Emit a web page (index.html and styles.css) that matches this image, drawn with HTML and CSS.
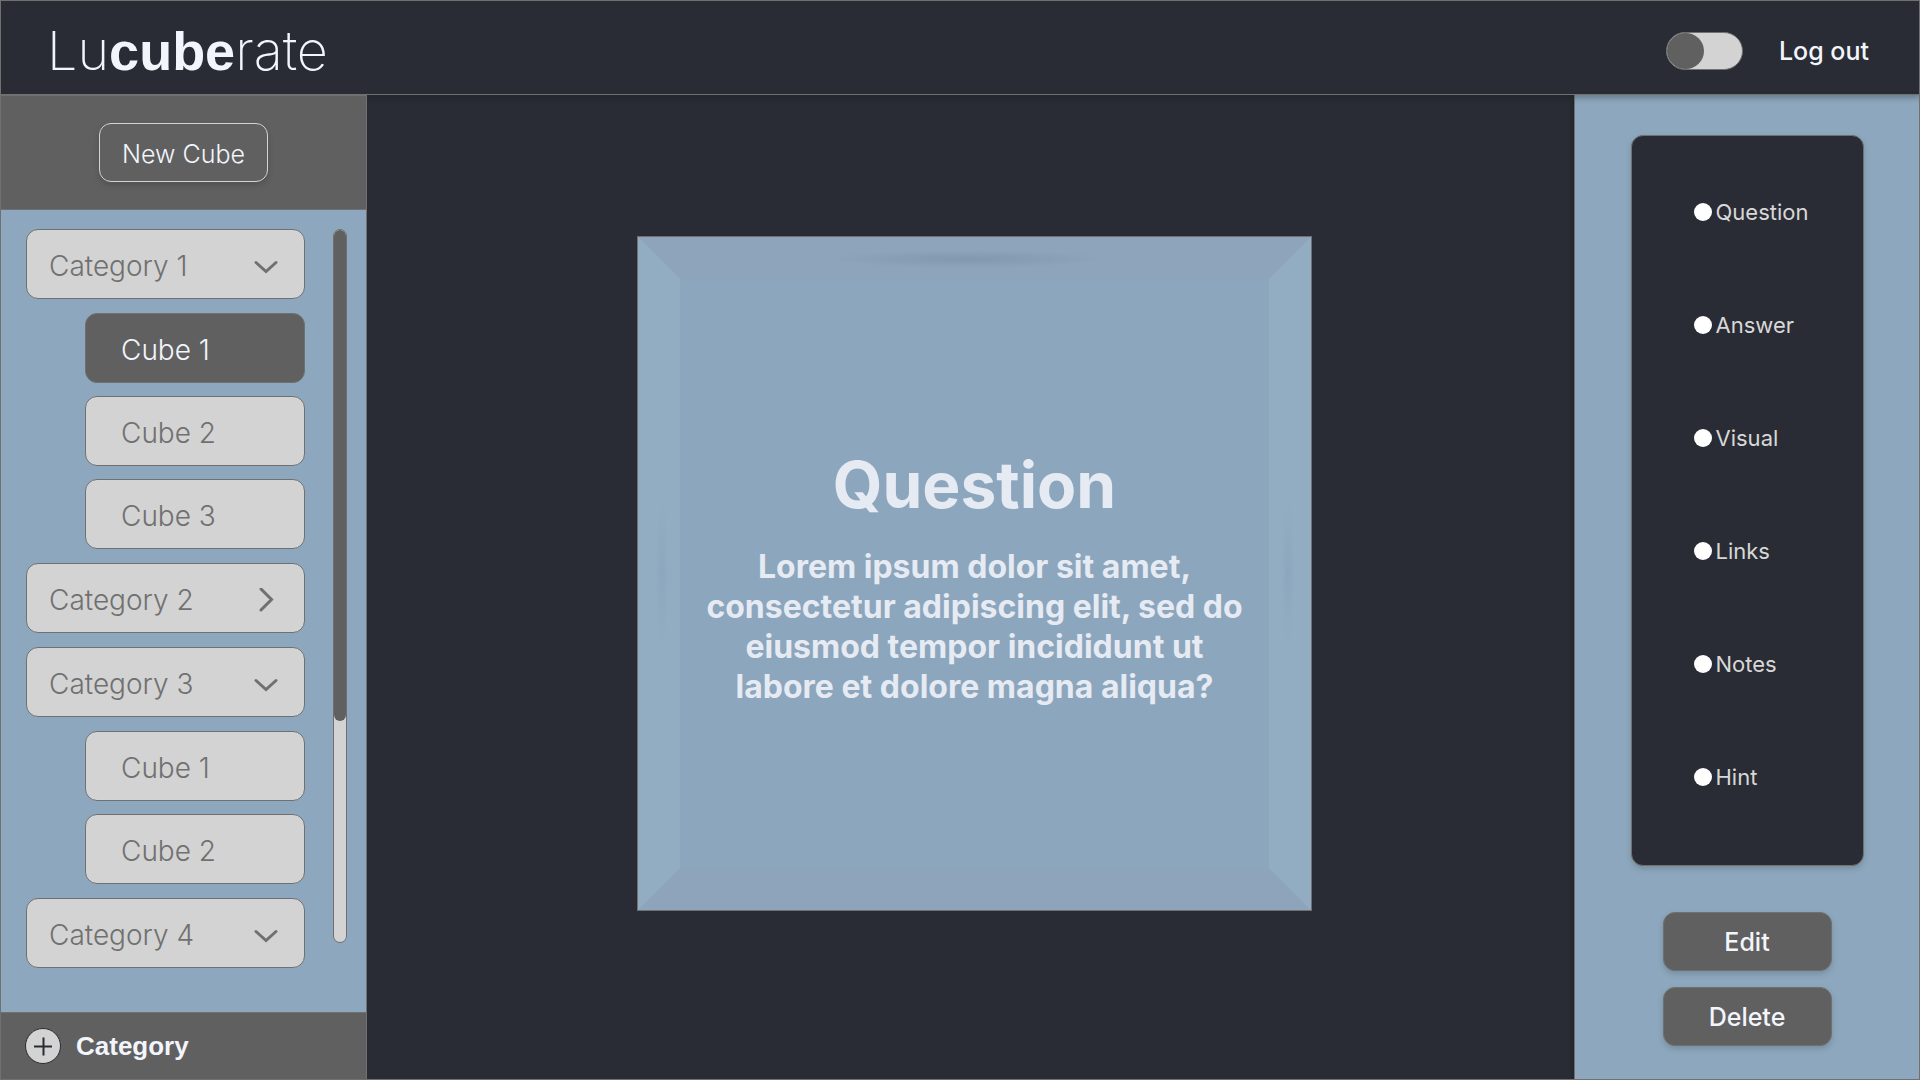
FILE: index.html
```html
<!DOCTYPE html>
<html lang="en">
<head>
<meta charset="utf-8">
<meta name="viewport" content="width=device-width, initial-scale=1">
<title>Lucuberate</title>
<link rel="stylesheet" href="styles.css">
</head>
<body>
<header class="topbar">
  <h1 class="logo">Lu<strong>cube</strong>rate</h1>
  <div class="topbar-actions">
    <input class="switch" type="checkbox" role="switch" aria-label="Theme">
    <a class="logout" href="#">Log out</a>
  </div>
</header>
<div class="layout">
  <aside class="sidebar">
    <div class="sidebar-head">
      <button class="btn btn-outline" type="button">New Cube</button>
    </div>
    <div class="sidebar-body">
      <ul class="categories">
        <li class="category">
          <button class="item" type="button">Category 1
            <svg class="chevron" viewBox="0 0 24 24" aria-hidden="true"><path d="M2 8.500 12 17.500 22 8.500"/></svg>
          </button>
          <ul class="cubes">
            <li><button class="item item-cube item-active" type="button">Cube 1</button></li>
            <li><button class="item item-cube" type="button">Cube 2</button></li>
            <li><button class="item item-cube" type="button">Cube 3</button></li>
          </ul>
        </li>
        <li class="category">
          <button class="item" type="button">Category 2
            <svg class="chevron" viewBox="0 0 24 24" aria-hidden="true"><path d="M7 1 17.500 11.500 7 22"/></svg>
          </button>
        </li>
        <li class="category">
          <button class="item" type="button">Category 3
            <svg class="chevron" viewBox="0 0 24 24" aria-hidden="true"><path d="M2 8.500 12 17.500 22 8.500"/></svg>
          </button>
          <ul class="cubes">
            <li><button class="item item-cube" type="button">Cube 1</button></li>
            <li><button class="item item-cube" type="button">Cube 2</button></li>
          </ul>
        </li>
        <li class="category">
          <button class="item" type="button">Category 4
            <svg class="chevron" viewBox="0 0 24 24" aria-hidden="true"><path d="M2 8.500 12 17.500 22 8.500"/></svg>
          </button>
        </li>
      </ul>
      <div class="track"><div class="thumb"></div></div>
    </div>
    <div class="sidebar-foot">
      <button class="add" type="button">
        <svg class="add-icon" viewBox="0 0 36 36" aria-hidden="true"><circle cx="18" cy="18" r="17.500"/><path d="M9 18.500H27M18.500 9.500V27.500"/></svg>
        Category
      </button>
    </div>
  </aside>
  <main class="stage">
    <article class="cube">
      <h2 class="cube-title">Question</h2>
      <p class="cube-text">Lorem ipsum dolor sit amet, consectetur adipiscing elit, sed do eiusmod tempor incididunt ut labore et dolore magna aliqua?</p>
    </article>
  </main>
  <aside class="panel">
    <div class="sides" role="radiogroup" aria-label="Cube side">
      <label class="side"><input class="radio" type="radio" name="side">Question</label>
      <label class="side"><input class="radio" type="radio" name="side">Answer</label>
      <label class="side"><input class="radio" type="radio" name="side">Visual</label>
      <label class="side"><input class="radio" type="radio" name="side">Links</label>
      <label class="side"><input class="radio" type="radio" name="side">Notes</label>
      <label class="side"><input class="radio" type="radio" name="side">Hint</label>
    </div>
    <div class="panel-actions">
      <button class="btn" type="button">Edit</button>
      <button class="btn" type="button">Delete</button>
    </div>
  </aside>
</div>
</body>
</html>
```
FILE: styles.css
```css
:root {
  --dark: #292c34;
  --blue: #8da8be;
  --grey: #606060;
  --line: #707070;
  --light: #d3d3d3;
  --text: #f2f5fc;
  --shadow: 0 3px 6px rgba(0, 0, 0, 0.16);
}

* {
  box-sizing: border-box;
}

body {
  margin: 0;
  min-height: 100vh;
  display: flex;
  flex-direction: column;
  border: 1px solid var(--line);
  background: var(--dark);
  color: var(--text);
  font-family: Inter, "Liberation Sans", sans-serif;
}

button {
  font: inherit;
  color: inherit;
  cursor: pointer;
}

ul {
  margin: 0;
  padding: 0;
  list-style: none;
}

/* Top bar */
.topbar {
  position: relative;
  display: flex;
  align-items: center;
  justify-content: space-between;
  min-height: 94px;
  padding: 6px 50px 0 46px;
  border-bottom: 1px solid var(--line);
  box-shadow: var(--shadow);
}

.logo {
  margin: 0;
  font-size: 54px;
  line-height: 64px;
  font-weight: 200;
}

.logo strong {
  font-family: "Liberation Sans", sans-serif;
  font-weight: 700;
}

.topbar-actions {
  display: flex;
  align-items: center;
  gap: 36px;
}

.switch {
  appearance: none;
  display: flex;
  width: 77px;
  height: 38px;
  margin: 0;
  border: 1px solid var(--line);
  border-radius: 19px;
  background: var(--light);
}

.switch::before {
  content: "";
  width: 37px;
  border-radius: 50%;
  background: var(--grey);
}

.logout {
  color: var(--text);
  font-size: 25px;
  line-height: 32px;
  font-weight: 500;
  text-decoration: none;
}

/* Three columns */
.layout {
  flex: 1;
  display: grid;
  grid-template-columns: 366px 1fr 345px;
}

.sidebar {
  position: relative;
  display: flex;
  flex-direction: column;
  border-top: 1px solid var(--line);
  border-right: 1px solid var(--line);
  background: var(--blue);
}

.sidebar-head {
  display: flex;
  justify-content: center;
  padding: 27px;
  border-bottom: 1px solid var(--line);
  background: var(--grey);
}

.btn {
  width: 169px;
  height: 59px;
  padding: 0;
  border: 1px solid var(--line);
  border-radius: 12px;
  background: var(--grey);
  box-shadow: var(--shadow);
  font-size: 25px;
  font-weight: 500;
}

.btn-outline {
  padding-top: 2px;
  border-color: var(--light);
  font-size: 25px;
  font-weight: 300;
}

.sidebar-body {
  flex: 1;
  display: flex;
  align-items: flex-start;
  gap: 28px;
  padding: 19px 19px 19px 25px;
}

.categories {
  flex: 1;
  display: flex;
  flex-direction: column;
  gap: 14px;
}

.category {
  display: flex;
  flex-direction: column;
  gap: 14px;
}

.cubes {
  display: flex;
  flex-direction: column;
  gap: 13px;
  padding-left: 59px;
}

.item {
  display: flex;
  align-items: center;
  justify-content: space-between;
  width: 100%;
  height: 70px;
  padding: 3px 26px 0 22px;
  border: 1px solid var(--line);
  border-radius: 12px;
  background: var(--light);
  color: var(--line);
  font-size: 28px;
  font-weight: 300;
}

.item-cube {
  padding-left: 35px;
}

.item-active {
  background: var(--grey);
  color: var(--text);
}

.chevron {
  width: 24px;
  height: 24px;
  fill: none;
  stroke: var(--line);
  stroke-width: 3;
  stroke-linecap: round;
}

.track {
  width: 14px;
  height: 714px;
  border: 1px solid var(--line);
  border-radius: 7px;
  background: var(--light);
}

.thumb {
  height: 69%;
  border-radius: 6px;
  background: var(--grey);
}

.sidebar-foot {
  padding: 15px 24px;
  border-top: 1px solid var(--line);
  background: var(--grey);
}

.add {
  display: flex;
  align-items: center;
  gap: 15px;
  padding: 0;
  border: 0;
  background: none;
  font-family: "Liberation Sans", sans-serif;
  font-size: 26px;
  font-weight: 700;
}

.add-icon {
  width: 36px;
  height: 36px;
  fill: var(--light);
  stroke: var(--dark);
}

.add-icon path {
  stroke-width: 2;
}

/* Cube */
.stage {
  display: flex;
  align-items: center;
  justify-content: center;
  padding: 24px 24px 52px 32px;
}

.cube {
  position: relative;
  display: flex;
  flex-direction: column;
  align-items: center;
  justify-content: center;
  gap: 22px;
  width: 100%;
  max-width: 673px;
  aspect-ratio: 1;
  padding: 6px 20px 0;
  border: 42px solid;
  border-color: #8da4bb #92adc2;
  outline: 1px solid var(--line);
  background: #8ca6bd;
  color: #e6eaf2;
  text-align: center;
}

/* Soft reflections on the bevel */
.cube::before {
  content: "";
  position: absolute;
  inset: -42px;
  background:
    radial-gradient(closest-side, rgba(120, 140, 160, 0.5), rgba(120, 140, 160, 0)) 48% 13px / 280px 18px no-repeat,
    radial-gradient(closest-side, rgba(130, 150, 180, 0.3), rgba(130, 150, 180, 0)) 17px 50% / 14px 150px no-repeat,
    radial-gradient(closest-side, rgba(130, 150, 180, 0.3), rgba(130, 150, 180, 0)) 643px 50% / 14px 150px no-repeat;
}

.cube-title {
  margin: 0;
  font-size: 64px;
  line-height: 80px;
  font-weight: 700;
}

.cube-text {
  margin: 0;
  font-size: 32px;
  line-height: 40px;
  font-weight: 700;
}

/* Right panel */
.panel {
  display: flex;
  flex-direction: column;
  align-items: center;
  gap: 46px;
  padding: 40px 0 33px;
  border-left: 1px solid var(--line);
  background: var(--blue);
  box-shadow: inset 0 8px 6px -6px rgba(0, 0, 0, 0.16), 0 3px 6px rgba(0, 0, 0, 0.3);
}

.sides {
  display: flex;
  flex-direction: column;
  justify-content: center;
  gap: 85px;
  width: 233px;
  flex: 1;
  padding: 0 62px 12px;
  border: 1px solid var(--line);
  border-radius: 12px;
  background: var(--dark);
  box-shadow: var(--shadow);
}

.side {
  display: flex;
  align-items: center;
  gap: 4px;
  color: #d8d8d8;
  font-size: 22px;
  line-height: 28px;
}

.radio {
  appearance: none;
  flex: none;
  width: 18px;
  height: 18px;
  margin: 0;
  border-radius: 50%;
  background: #fff;
}

.panel-actions {
  display: flex;
  flex-direction: column;
  gap: 16px;
}
```
